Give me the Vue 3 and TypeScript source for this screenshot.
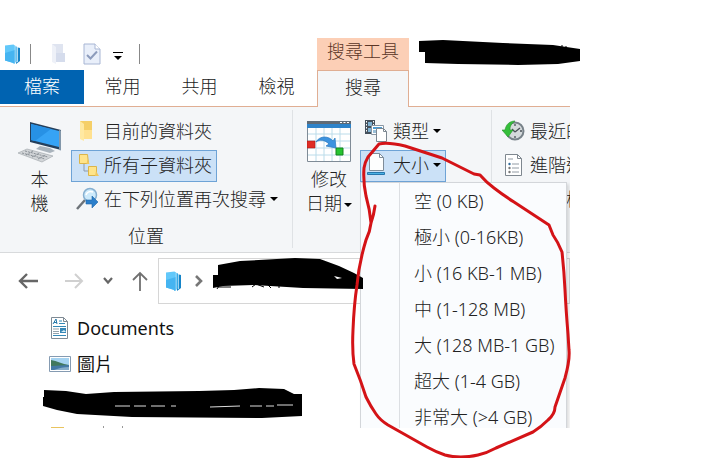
<script setup lang="ts">
import { ref } from 'vue'

const tabs: string[] = ['常用', '共用', '檢視']
const sizes: string[] = [
  '空 (0 KB)',
  '極小 (0-16KB)',
  '小 (16 KB-1 MB)',
  '中 (1-128 MB)',
  '大 (128 MB-1 GB)',
  '超大 (1-4 GB)',
  '非常大 (>4 GB)',
]
const menuOpen = ref(true)
</script>

<template>
  <div class="page">
    <main class="explorer">
      <header class="titlebar">
        <div class="quick">
          <svg class="ic-lib" viewBox="0 0 18 22">
            <path d="M12 4l4 1v13l-4 3z" fill="#1684c8" />
            <path d="M9 2l4 1.500v15L9 21z" fill="#35aae6" stroke="#e4f6ff" stroke-width=".6" />
            <path d="M1 2.500L9.500 1.500l1.500 1.500v17.500L1 17.500z" fill="#62c8fa" />
            <path d="M1 10l10-3v13.500L1 17.500z" fill="#45b4f1" />
            <path d="M13.500 4v15M11.200 3v17" stroke="#d8f2ff" stroke-width=".7" />
          </svg>
          <i class="bar"></i>
          <button class="plain folder-btn" aria-label="新增資料夾">
            <svg class="ic-folder" viewBox="0 0 16 22">
              <path d="M1 1h11v18H1z" fill="#dfe4f0" />
              <path d="M1 1l4 3v17l-4-2z" fill="#eef1f8" />
              <path d="M5 10h9v9H5z" fill="#d5dcec" />
            </svg>
          </button>
          <button class="plain" aria-label="內容">
            <svg class="ic-check" viewBox="0 0 18 22">
              <path d="M1 1h11l5 5v15H1z" fill="#e9effa" stroke="#a8b6d4" />
              <path d="M12 1v5h5" fill="#fff" stroke="#a8b6d4" />
              <path d="M4 12l3.500 3.500L14 8.500" fill="none" stroke="#8d9cbc" stroke-width="2" />
            </svg>
          </button>
          <button class="plain custom" aria-label="自訂快速存取工具列">
            <svg class="ic-custom" viewBox="0 0 10 9"><path d="M0 0h10v1H0zM1 4h8L5 8z" fill="#000" /></svg>
          </button>
          <i class="bar"></i>
        </div>
        <div class="context">搜尋工具</div>
      </header>

      <nav class="tabs">
        <button class="tab file">檔案</button>
        <button v-for="t in tabs" :key="t" class="tab">{{ t }}</button>
        <button class="tab active">搜尋</button>
      </nav>

      <section class="ribbon">
        <div class="group place">
          <div class="tools">
            <button class="big pc">
              <svg class="ic-big" viewBox="0 0 44 42">
                <path d="M12 1l31 8v20L12 21z" fill="#243f5c" />
                <path d="M13 3l28 7v16L13 19z" fill="#36a3f5" />
                <path d="M13 3l20 5-16 12-4-1z" fill="#2791e5" />
                <path d="M41 9l2 .5v20l-2-.6z" fill="#8297aa" />
                <path d="M22 25l10 2 5 3-5 2-14-4z" fill="#aab4bd" />
                <path d="M0 32l9-4 26 7-11 6z" fill="#d2d5d8" stroke="#9ba1a6" stroke-width=".6" />
                <path d="M4 32l23 6M7 30l23 6M8 34l7-4M14 36l8-4M20 38l8-4" stroke="#777f86" stroke-width=".8" stroke-dasharray="2 1" />
              </svg>
              <span>本<br />機</span>
            </button>
            <div class="stack">
              <button class="cmd">
                <svg class="ic" viewBox="0 0 24 24">
                  <path d="M4 2h12v18H4z" fill="#f5cf68" />
                  <path d="M4 2l4 3v17l-4-2z" fill="#ffe9a2" />
                  <path d="M8 11h8v9H8z" fill="#ffe190" />
                </svg>
                <span>目前的資料夾</span>
              </button>
              <button class="cmd on">
                <svg class="ic" viewBox="0 0 24 24">
                  <path d="M8 10v8h5" fill="none" stroke="#8f9bab" />
                  <path d="M3.500 1.500h8l1 9h-9zM12.500 13.500h8v9h-8z" fill="#ffe48a" stroke="#dbb54b" />
                  <path d="M11.500 6l2 5h-3zM20 18l3 5h-4z" fill="#f0c75e" />
                </svg>
                <span>所有子資料夾</span>
              </button>
              <button class="cmd">
                <svg class="ic" viewBox="0 0 24 24">
                  <path d="M9 13L1 22" stroke="#6d7379" stroke-width="2.500" />
                  <circle cx="14" cy="8" r="6.500" fill="#cdeafb" stroke="#86afd0" stroke-width="1.500" />
                  <path d="M10 8c1-3 4-4 7-3" fill="none" stroke="#fff" stroke-width="1.500" />
                  <path d="M10 13h6v-4l6 6-6 6v-4h-6z" fill="#2b7fcb" stroke="#1e66a8" stroke-width=".6" />
                </svg>
                <span>在下列位置再次搜尋</span><i class="caret"></i>
              </button>
            </div>
          </div>
          <div class="label">位置</div>
        </div>

        <div class="group refine">
          <div class="tools">
            <button class="big date">
              <svg class="ic-big" viewBox="0 0 44 42">
                <path d="M.5.500h43v40H.5z" fill="#fff" stroke="#7f8b96" />
                <path d="M0 0h44v3H0z" fill="#5f6b76" /><path d="M0 3h44v4H0z" fill="#2e83c9" />
                <path d="M33 1.500h9" stroke="#fff" stroke-dasharray="2 1.500" />
                <path d="M9 7v33M17 7v33M25 7v33M33 7v33M1 13h42M1 20h42M1 27h42M1 34h42" stroke="#bbdcea" />
                <path d="M0 20h8v7H0z" fill="#e02c24" stroke="#a71b16" stroke-width=".6" />
                <path d="M29 27h7v7h-7z" fill="#26c431" stroke="#14831d" />
                <path d="M9 21c4-7 13-6 17-1l2-3 1 10-10-2 3-2c-4-4-9-5-13-2z" fill="#3c93df" stroke="#2978be" stroke-width=".7" />
              </svg>
              <span>修改<br />日期<i class="caret"></i></span>
            </button>
            <div class="stack">
              <button class="cmd kind">
                <svg class="ic" viewBox="0 0 24 24">
                  <path d="M0 1h10v14H0z" fill="#434f5b" />
                  <path d="M1.500 2v12M8.500 2v12" stroke="#fff" stroke-dasharray="1.500 1.500" />
                  <path d="M3 3h4v4H3zM3 9h4v4H3z" fill="#7fb2d3" />
                  <path d="M6.500 6.500h12v9h-12z" fill="#fff" stroke="#8996a3" />
                  <path d="M8 8h9v2H8z" fill="#4b9bd3" /><path d="M8 11h4v3H8z" fill="#9abfd8" />
                  <path d="M11.500 9.500h7l3 3v10h-10z" fill="#fff" stroke="#7c8791" />
                  <path d="M18.500 9.500v3h3" fill="none" stroke="#7c8791" />
                </svg>
                <span>類型</span><i class="caret"></i>
              </button>
              <div class="dropdown">
                <button class="cmd on" aria-haspopup="menu" :aria-expanded="menuOpen" @click="menuOpen = !menuOpen">
                  <svg class="ic" viewBox="0 0 24 24">
                    <path d="M4.500.500h10l4 4v13h-14z" fill="#fdfefe" stroke="#7e8c99" />
                    <path d="M14.500.500v4h4" fill="none" stroke="#7e8c99" />
                    <path d="M2.500 19.500h17v2h-17z" fill="#4bb2e5" stroke="#2676ad" />
                  </svg>
                  <span>大小</span><i class="caret"></i>
                </button>
                <div v-if="menuOpen" class="menu" role="menu">
                  <button v-for="s in sizes" :key="s" role="menuitem">{{ s }}</button>
                </div>
              </div>
            </div>
          </div>
        </div>

        <div class="group options">
          <div class="stack">
            <button class="cmd">
              <svg class="ic" viewBox="0 0 24 24">
                <circle cx="13" cy="12" r="8.500" fill="#d5dadc" stroke="#788289" stroke-width="2" />
                <path d="M13 13l5-4M13 13l-3-3M13 5v2M20 12h-2M13 19v-2" fill="none" stroke="#4a5257" stroke-width="1.300" />
                <path d="M0 11h3c1-6 5-9 10-9-4 3-5 5-5 9h3l-5 7z" fill="#35bf3b" stroke="#249029" stroke-width=".6" />
              </svg>
              <span>最近的搜尋</span>
            </button>
            <button class="cmd">
              <svg class="ic" viewBox="0 0 24 24">
                <path d="M3.500 1.500h12l4 4v17h-16z" fill="#fff" stroke="#7e878f" />
                <path d="M15.500 1.500v4h4" fill="none" stroke="#7e878f" />
                <path d="M6 6h5M10 11h7M10 15h7M10 19h7" stroke="#929ba4" />
                <circle cx="7.500" cy="11" r="1.200" fill="#326b9b" /><circle cx="7.500" cy="15" r="1.200" fill="#777" /><circle cx="7.500" cy="19" r="1.200" fill="#777" />
              </svg>
              <span>進階選項</span>
            </button>
            <button class="cmd"><i class="ic"></i><span>開啟檔案位置</span></button>
          </div>
        </div>
      </section>

      <nav class="navbar">
        <button class="plain" aria-label="上一頁">
          <svg class="ic-nav" viewBox="0 0 20 20"><path d="M20 10H3M9 3l-7 7 7 7" fill="none" stroke="#666" stroke-width="2.400" /></svg>
        </button>
        <button class="plain next" aria-label="下一頁">
          <svg class="ic-nav" viewBox="0 0 20 20"><path d="M1 10h17M11 3l7 7-7 7" fill="none" stroke="#d0d0d0" stroke-width="2" /></svg>
        </button>
        <button class="plain" aria-label="最近的位置">
          <svg class="ic-chev" viewBox="0 0 12 12"><path d="M2 3l4 4.500L10 3" fill="none" stroke="#666" stroke-width="2.200" /></svg>
        </button>
        <button class="plain" aria-label="上移">
          <svg class="ic-up" viewBox="0 0 16 20"><path d="M8 20V2M1 9l7-7 7 7" fill="none" stroke="#707070" stroke-width="1.800" /></svg>
        </button>
        <div class="address">
          <svg class="ic-lib" viewBox="0 0 18 22">
            <path d="M12 4l4 1v13l-4 3z" fill="#1684c8" />
            <path d="M9 2l4 1.500v15L9 21z" fill="#35aae6" />
            <path d="M1 2.500L9.500 1.500l1.500 1.500v17.500L1 17.500z" fill="#62c8fa" />
            <path d="M1 10l10-3v13.500L1 17.500z" fill="#45b4f1" />
            <path d="M13.500 4v15M11.200 3v17" stroke="#d8f2ff" stroke-width=".7" />
          </svg>
          <svg class="ic-chev" viewBox="0 0 12 12"><path d="M3 1l5 5-5 5" fill="none" stroke="#777" stroke-width="2.600" /></svg>
        </div>
      </nav>

      <aside class="tree">
        <a href="#documents">
          <svg class="ic-tree" viewBox="0 0 22 22">
            <path d="M2.500.500h12l4 4v17h-16z" fill="#fff" stroke="#7f8a94" />
            <path d="M14.500.500v4h4" fill="none" stroke="#7f8a94" />
            <path d="M4 7l3-5 1 5M5 5.500h3" fill="none" stroke="#2377a9" />
            <path d="M10 4h3M10 6.500h6M4 9.500h13M4 18.500h13" stroke="#3489b7" />
            <path d="M4 12h6M4 14.500h6M4 16.500h6" stroke="#94a3ad" />
            <path d="M11 11h6v5h-6z" fill="#3686b6" /><path d="M12 15l3-2 2 2z" fill="#d9f0f6" />
          </svg>
          <span>Documents</span>
        </a>
        <a href="#pictures">
          <svg class="ic-tree" viewBox="0 0 22 22">
            <path d="M.5 3.500h21v15H.5z" fill="#fff" stroke="#859bb2" />
            <path d="M2 5h18v12H2z" fill="#a5d3f1" />
            <path d="M2 7c6 1 11 4 18 5v2H2z" fill="#41785d" />
            <path d="M2 13l18-1v5H2z" fill="#4479a5" />
            <path d="M5 17c5-2 10-3 15-3v3z" fill="#85acc9" />
          </svg>
          <span>圖片</span>
        </a>
        <div class="hidden-row"></div>
        <div class="cut-row">
          <svg class="ic-cut" viewBox="0 0 14 10"><path d="M0 9h13v1H0z" fill="#e9c45f" /></svg>
        </div>
      </aside>
    </main>

    <svg class="marks" viewBox="0 0 710 458">
      <path d="M419 41l24-1 60 3 50 2 27 4v12l-22 3-40 1-60-1-33-1V52h-6z" />
      <path d="M562 45v3M566 46v3" stroke="#000" />
      <path d="M213 275h5v-10l22-4 55-3 25 1 19 7 15 7 9 5v11l-60-1-50-3-30 1-10 2z" />
      <path d="M218 287h13M220 284l-3 5M252 287l4-3 8 3M268 285l3 3M279 285v3M288 285l2 2" fill="none" stroke="#000" />
      <path d="M334 276l8 2-5 1z" fill="#fff" />
      <path d="M44 390l22 1 20 3 28-2 85-1 35-1 25-2 25 1 10 5h8v22l-40 2-130-1-55-3-20-4-14-4V397h1z" />
      <path d="M115 406h15m4 0h12m5 0h14m6 0h5M210 407l30-1m10 0h12m4 0h8m3-1h16" fill="none" stroke="#ddd" />
      <path d="M103 427h1M122 427h1" stroke="#333" />
      <path
        class="loop"
        d="M375 206Q374 214 371 223Q370 210 366 196Q363 182 364 168Q365 162 368 157L379 144Q388 142 405 146L442 158L474 174L480 175Q486 182 494 188Q503 195 514 202L549 225L553 235Q558 242 562 252Q564 270 565 290Q566 310 568 334L569 350Q570 360 565 378L555 407Q555 414 548 420Q541 427 533 432L496 448Q487 453 478 455Q460 459 445 455Q436 452 427 447L388 425Q380 420 376 414Q371 407 366 397Q361 381 354 364Q352 350 353 330Q354 305 357 285Q359 263 366 240Q370 232 371 223"
      />
    </svg>
  </div>
</template>

<style>
body {
  margin: 0;
  background: #fff;
}
</style>

<style scoped>
.page {
  position: relative;
  font-family: "Noto Sans", "Noto Sans CJK TC", sans-serif;
  font-weight: 300;
  font-size: 18px;
  line-height: 24px;
  color: #222;
  padding-bottom: 30px;
}
.explorer {
  margin-right: 140px;
  overflow: hidden;
}
button {
  font: inherit;
  color: inherit;
  border: 0;
  padding: 0;
  background: none;
  white-space: nowrap;
}
a {
  color: #111;
  text-decoration: none;
}
svg {
  display: block;
  flex: none;
}
.titlebar {
  display: flex;
  padding-top: 38px;
}
.quick {
  display: flex;
  align-items: center;
  flex: 0 0 317px;
  padding-left: 4px;
  box-sizing: border-box;
  height: 32px;
}
.ic-lib { width: 18px; height: 22px; }
.bar {
  width: 1px;
  height: 20px;
  margin-left: 8px;
  background: #888;
}
.folder-btn { margin: 0 16px 0 20px; }
.ic-folder { width: 16px; height: 22px; }
.ic-check { width: 18px; height: 22px; }
.custom { margin: 4px 8px 0 12px; }
.ic-custom { width: 10px; height: 9px; }
.context {
  width: 92px;
  height: 32px;
  line-height: 26px;
  text-align: center;
  background: #fccfb6;
  color: #5a3526;
}
.tabs {
  display: flex;
  border-bottom: 1px solid #e0ae93;
}
.tab {
  width: 77px;
  height: 36px;
  padding-bottom: 4px;
}
.tab.file {
  width: 84px;
  height: 34px;
  padding-bottom: 2px;
  background: #0063b1;
  color: #fff;
}
.tab.active {
  width: 92px;
  height: 37px;
  margin: 0 0 -1px 2px;
  border: solid #e0ae93;
  border-width: 1px 1px 0;
  background: #f4f6f8;
}
.ribbon {
  display: flex;
  background: #f4f6f8;
  border-bottom: 1px solid #d8dadc;
  height: 145px;
}
.group {
  flex: none;
  padding-top: 9px;
}
.group + .group { background: linear-gradient(#dfe2e5, #dfe2e5) 0 3px / 1px 138px no-repeat; }
.place { width: 292px; }
.refine { width: 199px; }
.options { padding-left: 6px; }
.tools { display: flex; }
.big {
  display: flex;
  flex-direction: column;
  align-items: center;
  padding-top: 5px;
  gap: 4px;
}
.pc { width: 71px; padding-left: 8px; }
.date { width: 68px; padding-left: 6px; }
.ic-big { width: 44px; height: 42px; }
.stack {
  display: flex;
  flex-direction: column;
  align-items: flex-start;
  gap: 2px;
}
.cmd {
  display: flex;
  align-items: center;
  height: 32px;
  padding: 0 4px 2px;
  border: 1px solid transparent;
  gap: 4px;
}
.cmd.on {
  background: #cbe1f7;
  border-color: #6ea3d6;
}
.ic { width: 24px; height: 24px; }
.caret {
  display: inline-block;
  border: solid transparent;
  border-width: 4px 4px 0;
  border-top-color: #000;
  vertical-align: middle;
}
.big .caret { margin-left: 2px; }
.label {
  text-align: center;
  padding-top: 8px;
}
.dropdown { position: relative; }
.menu {
  position: absolute;
  top: 32px;
  left: 0;
  z-index: 2;
  width: 205px;
  border: 1px solid #d3d6da;
  background: linear-gradient(#dcdfe3, #dcdfe3) 38px 0 / 1px 100% no-repeat #fafcfe;
  box-shadow: 2px 2px 3px #0002;
}
.menu button {
  display: block;
  width: 100%;
  height: 36px;
  padding-left: 53px;
  text-align: left;
}
.navbar {
  display: flex;
  align-items: center;
  gap: 18px;
  padding: 5px 0 0 18px;
}
.next { margin-left: 8px; }
.ic-nav { width: 20px; height: 20px; }
.ic-up { width: 16px; height: 20px; }
.ic-chev { width: 12px; height: 12px; }
.address {
  flex: 1;
  display: flex;
  align-items: center;
  gap: 10px;
  height: 44px;
  padding-left: 6px;
  margin-left: -8px;
  border: 1px solid #d6d6d6;
}
.tree {
  padding: 6px 0 0 49px;
  font-weight: 400;
}
.tree a {
  display: flex;
  align-items: center;
  gap: 6px;
  height: 36px;
}
.ic-tree { width: 22px; height: 22px; }
.hidden-row { height: 36px; }
.cut-row { height: 10px; padding-left: 2px; }
.ic-cut { width: 14px; height: 10px; }
.marks {
  position: absolute;
  top: 0;
  left: 0;
  z-index: 3;
  width: 710px;
  height: 458px;
  pointer-events: none;
}
.loop {
  fill: none;
  stroke: #d41317;
  stroke-width: 3;
  stroke-linecap: round;
  stroke-linejoin: round;
}
</style>
